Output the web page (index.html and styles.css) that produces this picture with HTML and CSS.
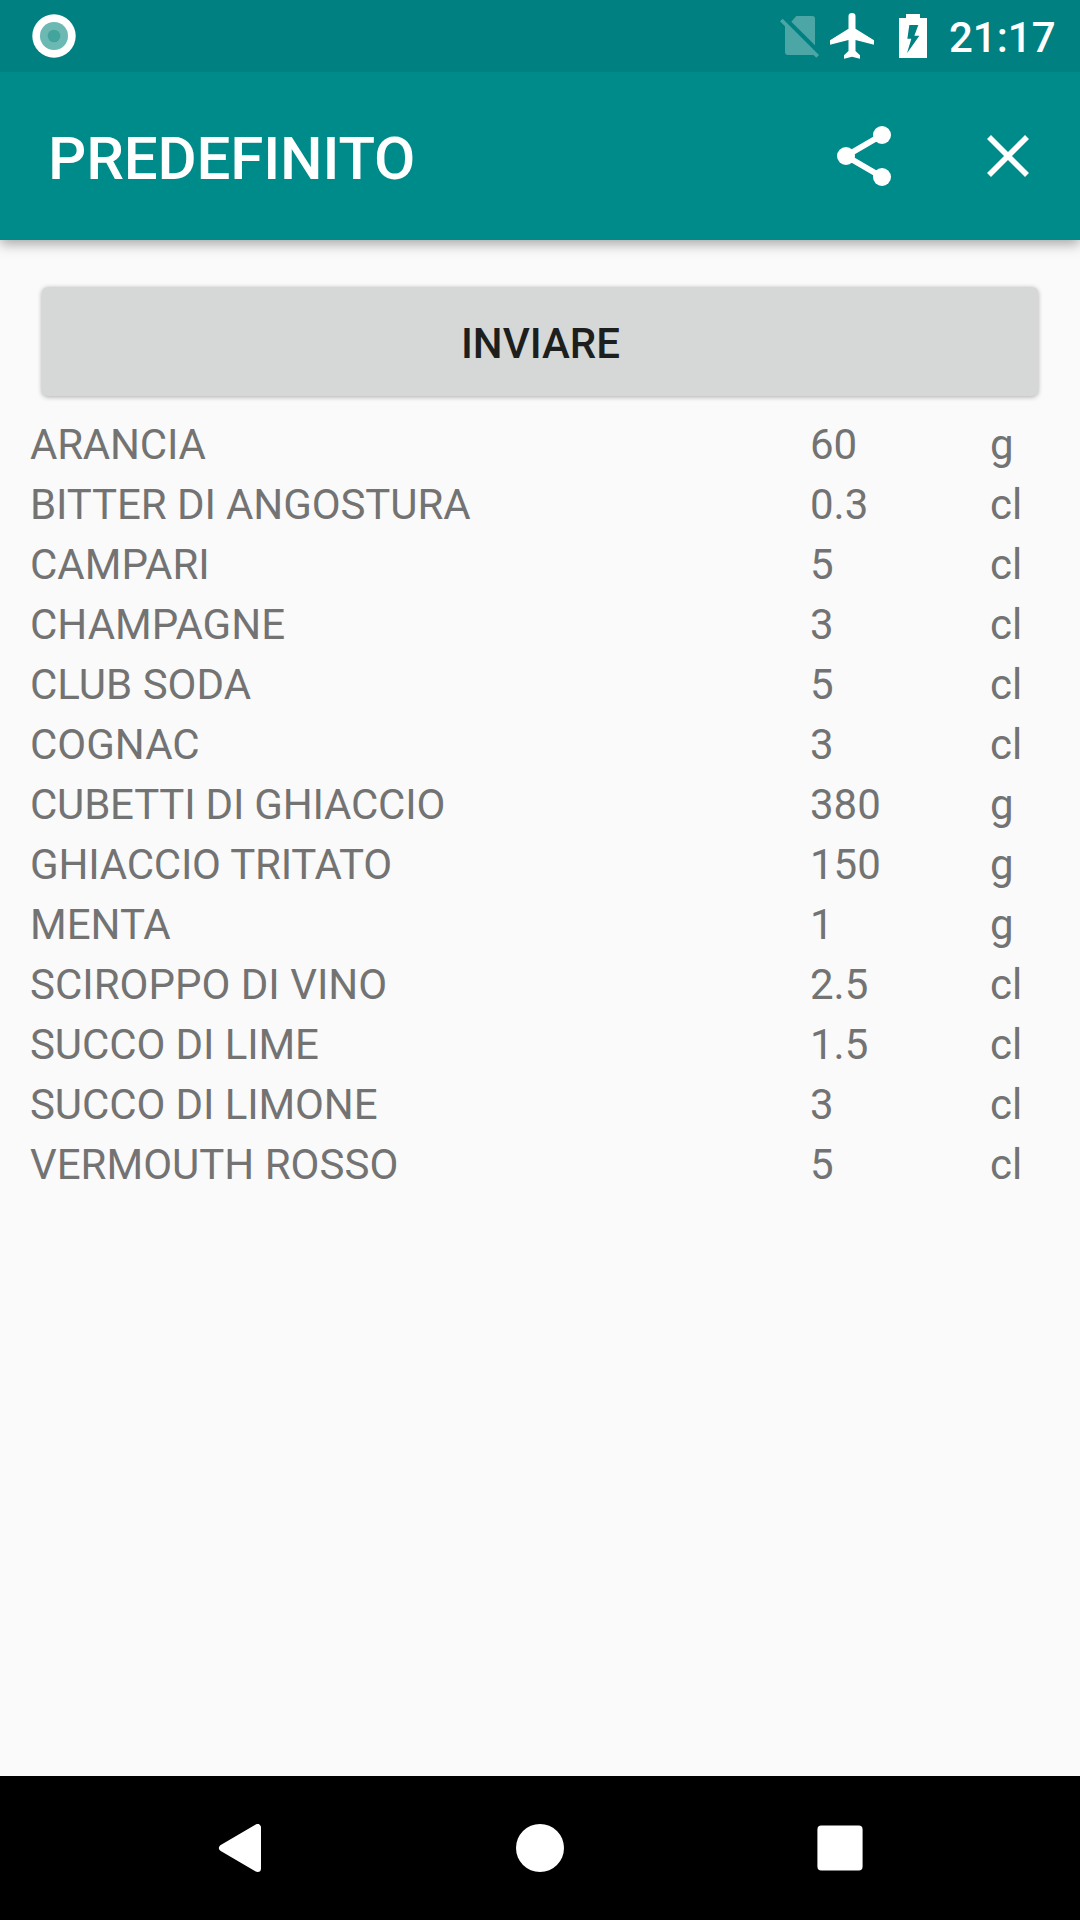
FILE: index.html
```html
<!DOCTYPE html>
<html lang="it">
<head>
<meta charset="utf-8">
<title>Predefinito</title>
<link rel="stylesheet" href="styles.css">
</head>
<body>
<div class="status-bar">
  <svg class="notification" viewBox="0 0 44 44"><circle cx="22" cy="22" r="21.7" fill="#fff"/><circle cx="22" cy="22" r="14" fill="#6cb8b3"/><circle cx="22" cy="22" r="6.3" fill="#43a49e"/></svg>
  <div class="status-icons">
    <svg class="no-sim" viewBox="0 0 117 126"><path fill="#4da6a6" d="M49 0H97Q105 0 105 8V88L34 17ZM15 23 105 113Q103 117 97 117H24Q15 117 15 108ZM8 8 117 117 109 125 0 16Z"/></svg>
    <svg class="airplane" viewBox="0 0 132 138"><path fill="#fff" d="M55.500 10A10.500 10 0 0 1 76.500 10V47L132 82V95L76.500 81V114L90 127V137L66 131 42 137V127L55.500 114V81L0 95V82L55.500 47Z"/></svg>
    <svg class="battery" viewBox="0 0 84 132"><path fill="#fff" fill-rule="evenodd" d="M21 0H63V12H84V132H0V12H21ZM31 33 25 74H37L24 118 61 65H46L58 33Z"/></svg>
  </div>
  <span class="clock">21:17</span>
</div>
<header class="app-bar">
  <h1 class="title">PREDEFINITO</h1>
  <svg class="share" viewBox="0 0 54 60"><path d="M45 9 9 30 45 51" fill="none" stroke="#fff" stroke-width="6"/><g fill="#fff"><circle cx="45" cy="9" r="9"/><circle cx="9" cy="30" r="9"/><circle cx="45" cy="51" r="9"/></g></svg>
  <svg class="close" viewBox="0 0 42 42"><path d="M2 2 40 40M40 2 2 40" stroke="#fff" stroke-width="5.6"/></svg>
</header>
<main class="content">
  <button class="send">INVIARE</button>
  <div class="ingredients">
    <span class="tight">ARANCIA</span><span>60</span><span>g</span>
    <span class="snug">BITTER DI ANGOSTURA</span><span>0.3</span><span>cl</span>
    <span>CAMPARI</span><span>5</span><span>cl</span>
    <span>CHAMPAGNE</span><span>3</span><span>cl</span>
    <span>CLUB SODA</span><span>5</span><span>cl</span>
    <span>COGNAC</span><span>3</span><span>cl</span>
    <span class="tight">CUBETTI DI GHIACCIO</span><span>380</span><span>g</span>
    <span class="tight">GHIACCIO TRITATO</span><span>150</span><span>g</span>
    <span>MENTA</span><span>1</span><span>g</span>
    <span>SCIROPPO DI VINO</span><span>2.5</span><span>cl</span>
    <span class="snug">SUCCO DI LIME</span><span>1.5</span><span>cl</span>
    <span class="snug">SUCCO DI LIMONE</span><span>3</span><span>cl</span>
    <span>VERMOUTH ROSSO</span><span>5</span><span>cl</span>
  </div>
</main>
<nav class="nav-bar">
  <svg viewBox="0 0 48 48"><path d="M6.5 24 41.5 3.5V44.5Z" fill="#fff" stroke="#fff" stroke-width="7" stroke-linejoin="round"/></svg>
  <svg viewBox="0 0 48 48"><circle cx="24" cy="24" r="24" fill="#fff"/></svg>
  <svg viewBox="0 0 48 48"><rect x="1.4" y="1.4" width="45.2" height="45.2" rx="4" fill="#fff"/></svg>
</nav>
</body>
</html>
```
FILE: styles.css
```css
* { box-sizing: border-box; }
body {
  margin: 0;
  width: 1080px;
  height: 1920px;
  display: flex;
  flex-direction: column;
  background: #fafafa;
  font-family: Roboto, sans-serif;
  overflow: hidden;
}
svg { display: block; flex: none; }
.status-bar {
  position: relative;
  z-index: 1;
  height: 72px;
  flex: none;
  display: flex;
  align-items: flex-start;
  padding: 14px 24px 0 32px;
  background: #008080;
  color: #fff;
}
.notification { width: 44px; height: 44px; }
.status-icons { display: flex; margin-left: auto; }
.no-sim { width: 39px; height: 42px; margin: 2px 11px 0 0; }
.airplane { width: 44px; height: 46px; margin: -1px 25px 0 0; }
.battery { width: 28px; height: 44px; }
.clock {
  width: 107px;
  margin-left: 22px;
  font-size: 42px;
  font-weight: 500;
  line-height: 48px;
}
.app-bar {
  height: 168px;
  flex: none;
  display: flex;
  align-items: center;
  padding: 0 51px 0 48px;
  background: #008b8b;
  box-shadow: 0 4px 12px rgba(0, 0, 0, .34);
}
.title {
  margin: 6px auto 0 0;
  color: #fff;
  font-size: 60px;
  font-weight: 500;
  line-height: 70px;
  letter-spacing: -.15px;
}
.share { width: 54px; height: 60px; }
.close { width: 42px; height: 42px; margin-left: 96px; }
.content { flex: 1; padding: 47px 30px 0; }
.send {
  display: block;
  width: 996px;
  height: 109px;
  margin: 0 12px 19px;
  padding: 4px 0 0 1px;
  border: 0;
  border-radius: 6px;
  background: #d6d8d7;
  box-shadow: 0 1px 5px rgba(0, 0, 0, .32);
  color: #1d1e1e;
  font: 500 42px/50px Roboto, sans-serif;
}
.ingredients {
  display: grid;
  grid-template-columns: 780px 180px 60px;
  grid-auto-rows: 60px;
  color: #737373;
  font-size: 42px;
  line-height: 60px;
}
.tight { letter-spacing: -.22px; }
.snug { letter-spacing: -.1px; }
.nav-bar {
  height: 144px;
  flex: none;
  display: flex;
  align-items: center;
  justify-content: center;
  gap: 252px;
  background: #000;
}
.nav-bar svg { width: 48px; height: 48px; }
```
